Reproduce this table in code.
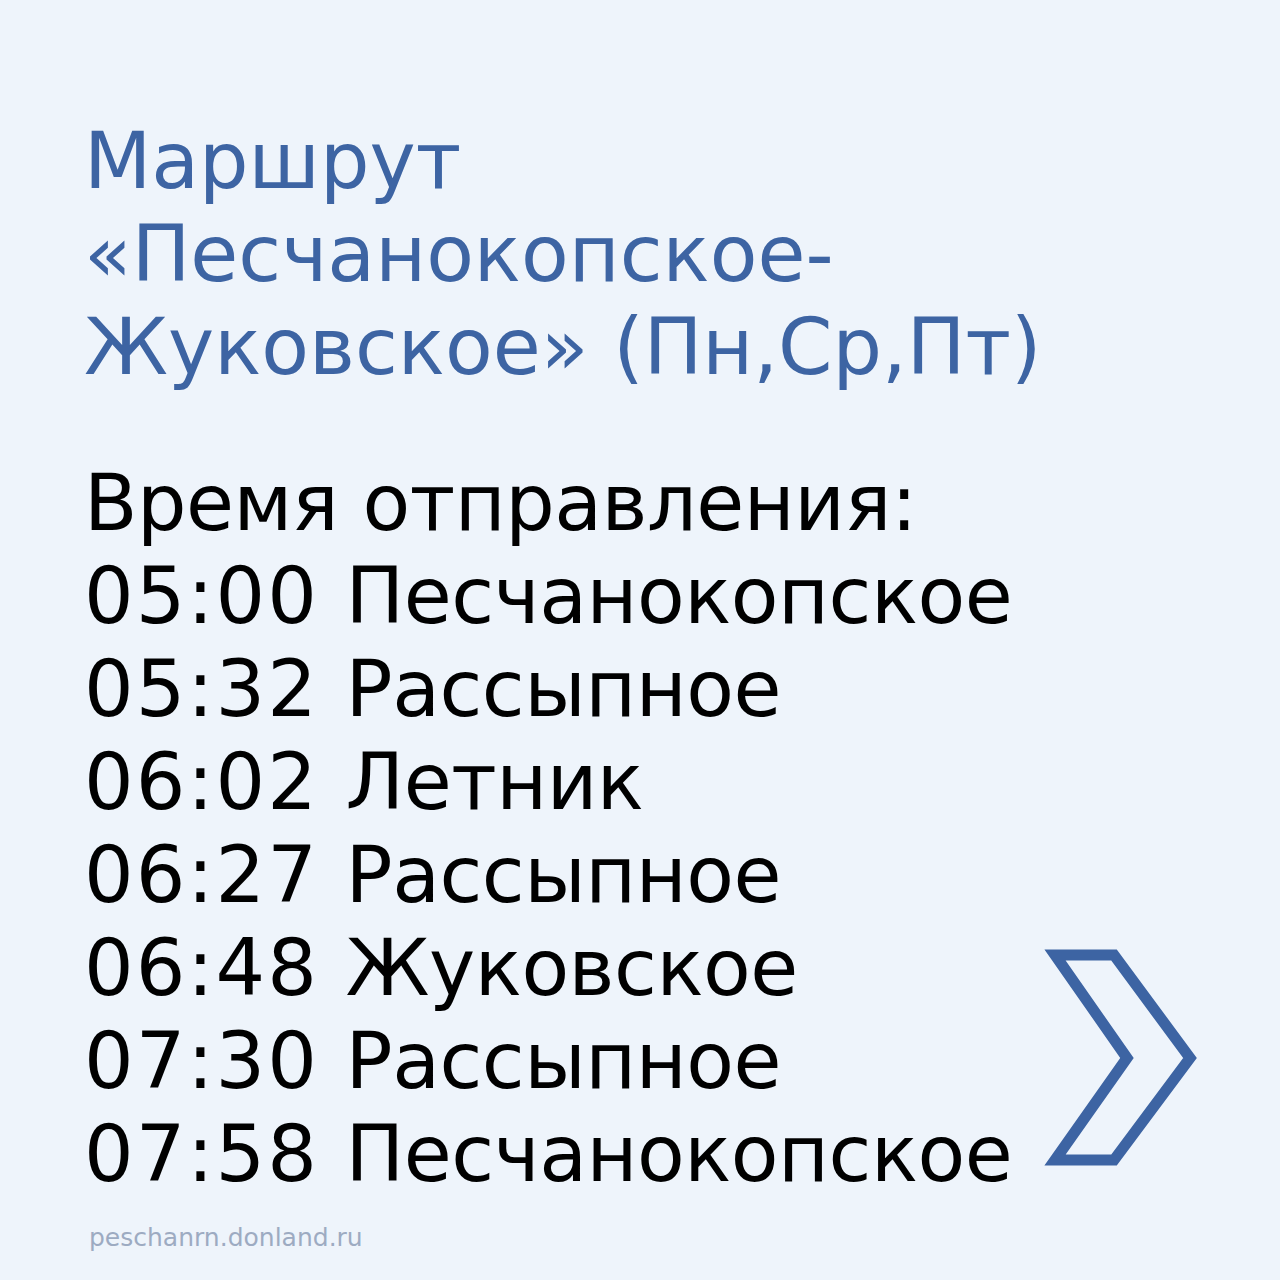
import React from "react";

export default function App() {
  const rows: [string, string][] = [
    ["05:00", "Песчанокопское"],
    ["05:32", "Рассыпное"],
    ["06:02", "Летник"],
    ["06:27", "Рассыпное"],
    ["06:48", "Жуковское"],
    ["07:30", "Рассыпное"],
    ["07:58", "Песчанокопское"],
  ];
  return (
    <div
      className="relative w-[1280px] h-[1280px] overflow-hidden bg-[#eef4fb] pl-[84px] pt-[115px]"
      style={{ fontFamily: '"DejaVu Sans", Verdana, sans-serif' }}
    >
      <div className="text-[#3d64a3] text-[78px] leading-[93px]">
        <div>Маршрут</div>
        <div>«Песчанокопское-</div>
        <div>Жуковское» (Пн,Ср,Пт)</div>
      </div>
      <div className="mt-[63px] text-black text-[78px] leading-[93px] tracking-[-0.5px]">
        <div>Время отправления:</div>
        {rows.map(([t, n]) => (
          <div key={t}>
            <span className="tracking-[2px]">{t} </span>
            {n}
          </div>
        ))}
      </div>
      <div className="absolute left-[89px] top-[1222px] text-[25px] leading-[32px] text-[#9dabc2]">
        peschanrn.donland.ru
      </div>
      <svg
        className="absolute left-0 top-0"
        width="1280"
        height="1280"
        viewBox="0 0 1280 1280"
      >
        <polygon
          points="1055,955 1114,955 1190,1058 1114,1160 1055,1160 1127,1058"
          fill="none"
          stroke="#3d64a3"
          strokeWidth="11"
          strokeLinejoin="miter"
        />
      </svg>
    </div>
  );
}
